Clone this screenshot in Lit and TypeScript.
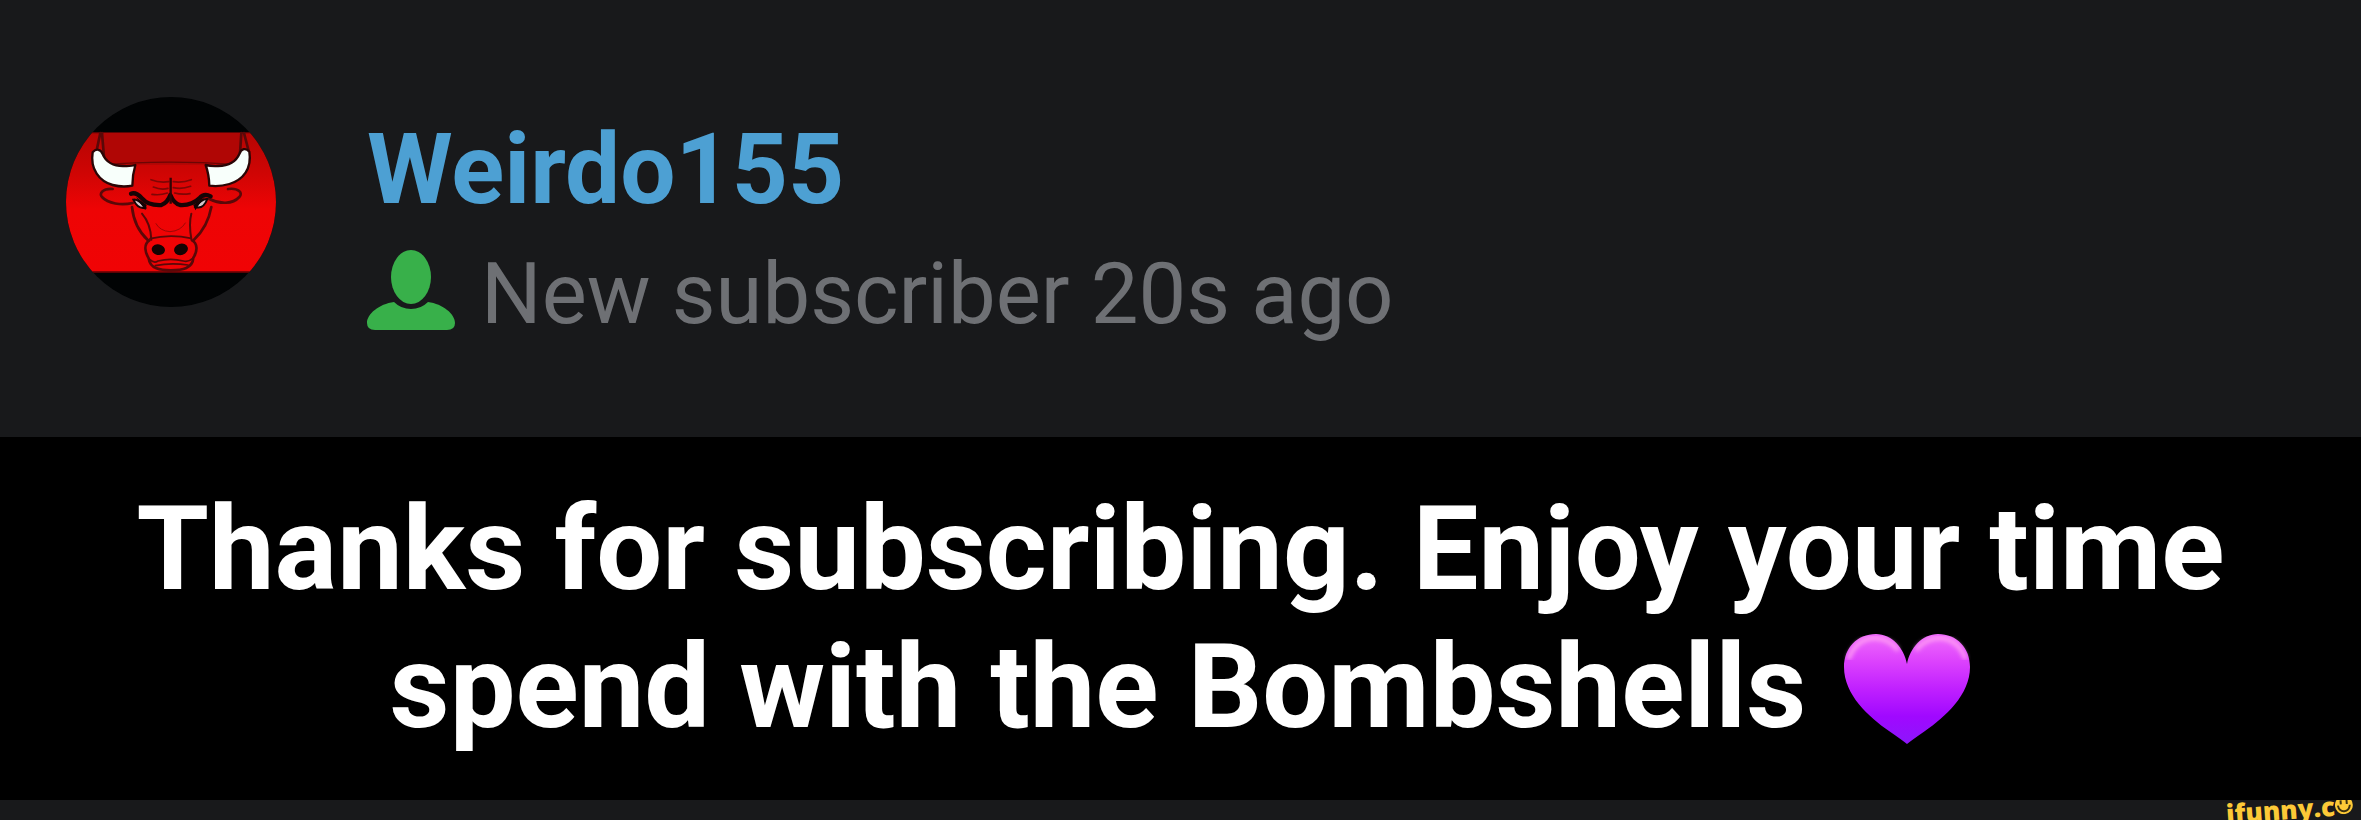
import { LitElement, html, css } from "lit";
import { customElement } from "lit/decorators.js";

@customElement("user-avatar")
class UserAvatar extends LitElement {
  static styles = css`
    :host { display: block; flex: none; width: 210px; height: 210px; }
    .art { display: block; width: 100%; height: 100%; }
  `;
  render() {
    return html`
      <svg class="art" viewBox="0 0 630 630" role="img" aria-label="Weirdo155 avatar">
        <defs>
          <clipPath id="disc"><circle cx="315" cy="315" r="315" /></clipPath>
          <linearGradient id="field" x1="0" y1="0" x2="0" y2="1">
            <stop offset="0" stop-color="#b50503" />
            <stop offset=".3" stop-color="#d00504" />
            <stop offset=".55" stop-color="#ee0405" />
            <stop offset="1" stop-color="#f00305" />
          </linearGradient>
        </defs>
        <g clip-path="url(#disc)">
          <rect width="630" height="630" fill="#010304" />
          <rect y="106" width="630" height="420" fill="url(#field)" />
          <path d="M0 107H630M0 525H630" stroke="#5d0304" stroke-width="4" />
          <path d="M112 108V174Q128 196 160 203H465Q505 194 524 170V108Z" fill="#b00605" />
          <path d="M118 204C230 192 390 194 505 202" fill="none" stroke="#6b0504" stroke-width="4" />
          <g fill="none" stroke="#5a0808" stroke-width="8" stroke-linecap="round" stroke-linejoin="round">
            <path d="M103 108L92 160M108 108L114 180M526 108L522 170M534 108L548 162" />
            <path d="M140 276C110 274 98 290 108 300C126 320 166 326 200 318" />
            <path d="M486 276C518 272 532 288 520 300C500 322 462 322 430 306" />
            <path d="M198 330C202 370 218 404 246 430M436 330C428 374 412 402 384 428" />
            <path d="M228 350Q254 380 256 428M376 350Q368 380 376 426" stroke-width="6" />
            <path d="M252 425Q312 410 376 424" stroke-width="5" />
            <path d="M270 380Q282 402 312 404Q344 402 358 378" stroke-width="3" stroke="#9c0706" />
            <path d="M250 430C230 444 240 470 248 484C252 516 284 520 315 520C350 520 380 514 382 482C396 462 394 438 378 430" />
            <path d="M252 488Q264 500 276 492Q314 482 352 492Q368 496 380 484M268 506Q314 496 366 504" stroke-width="5" />
          </g>
          <g fill="none" stroke="#7f0605" stroke-width="5" stroke-linecap="round">
            <path d="M255 248Q280 258 308 254M262 270Q286 280 306 274M258 292Q282 296 304 288" />
            <path d="M376 248Q350 258 322 254M374 268Q346 278 322 272M372 290Q346 294 326 288" />
          </g>
          <g stroke="#2a0606" stroke-width="7" stroke-linejoin="round" fill="#f8fffb">
            <path d="M80 166C91 153 104 157 110 171C119 194 142 208 174 207Q196 208 208 204Q199 234 199 266Q170 272 140 264C100 253 72 217 80 166Z" />
            <path d="M550 164C539 151 526 155 520 171C511 192 488 206 456 207Q434 208 419 204Q429 232 430 266Q460 270 490 261C532 248 558 215 550 164Z" />
          </g>
          <path d="M195 290Q210 284 228 304Q246 326 286 324Q304 318 313 294Q324 320 342 324Q378 326 400 304Q414 288 434 298" fill="none" stroke="#160405" stroke-width="13" stroke-linecap="round" stroke-linejoin="round" />
          <path d="M314 242V320" stroke="#300505" stroke-width="7" />
          <path d="M202 308Q218 306 238 332Q216 338 202 308ZM424 306Q408 304 388 330Q412 338 424 306Z" fill="#d5c4cb" stroke="#160405" stroke-width="6" />
          <path d="M210 300L242 324L238 340L222 318ZM416 300L382 324L388 340L404 316Z" fill="#120304" />
          <g fill="#140303">
            <ellipse cx="277" cy="458" rx="20" ry="16" transform="rotate(12 277 458)" />
            <ellipse cx="345" cy="457" rx="21" ry="17" transform="rotate(-18 345 457)" />
          </g>
        </g>
      </svg>
    `;
  }
}

@customElement("app-root")
class AppRoot extends LitElement {
  static styles = css`
    :host {
      display: flex;
      flex-direction: column;
      min-height: 100vh;
      background: #18191b;
      font-family: Roboto, "Liberation Sans", sans-serif;
    }
    .event { display: flex; align-items: flex-start; gap: 91px; padding: 97px 66px 86px; }
    .details { flex: 1; padding-top: 15px; }
    .name { margin: 0; font-size: 98px; line-height: 116px; font-weight: 700; color: #4da0d3; }
    .status { display: flex; align-items: center; gap: 26px; margin: 0; padding-top: 10px; font-size: 85px; line-height: 113px; color: #6e7074; }
    .person { flex: none; width: 88px; height: 80px; padding-bottom: 10px; fill: #38b04a; }
    .message {
      margin: 0;
      padding: 43px 128px 44px;
      background: #000;
      color: #fff;
      font-size: 117px;
      line-height: 138px;
      font-weight: 700;
      text-align: center;
    }
    .heart { width: 128px; height: 112px; margin-left: 8px; vertical-align: -18px; }
    .footer { position: relative; flex: 1; min-height: 20px; overflow: hidden; }
    .brand {
      position: absolute;
      right: 8px;
      top: -5px;
      display: flex;
      align-items: center;
      font: 800 26px/28px "Open Sans", sans-serif;
      color: #fcc937;
      transform: rotate(-4deg);
    }
    .smile { width: 18px; height: 18px; }
  `;
  render() {
    return html`
      <section class="event">
        <user-avatar></user-avatar>
        <div class="details">
          <h1 class="name">Weirdo155</h1>
          <p class="status">
            <svg class="person" viewBox="0 0 88 80" aria-hidden="true">
              <ellipse cx="44" cy="27" rx="20" ry="27" />
              <path d="M27 52C12 54 0 64 0 73Q0 80 8 80H80Q88 80 88 73C88 64 76 54 61 52Q54 59 44 59Q34 59 27 52Z" />
            </svg>
            <span>New subscriber 20s ago</span>
          </p>
        </div>
      </section>
      <p class="message">
        Thanks for subscribing. Enjoy your time spend with the Bombshells
        <svg class="heart" viewBox="0 0 128 112" role="img" aria-label="purple heart">
          <defs>
            <linearGradient id="violet" x1="0" y1="0" x2="0" y2="1">
              <stop offset="0" stop-color="#f06cfb" />
              <stop offset=".25" stop-color="#dc42fd" />
              <stop offset=".5" stop-color="#c020ff" />
              <stop offset=".75" stop-color="#a008ff" />
              <stop offset="1" stop-color="#8c16fb" />
            </linearGradient>
            <filter id="soft"><feGaussianBlur stdDeviation="2" /></filter>
          </defs>
          <path fill="url(#violet)" d="M64 31C61 15 49 1 33 1C14 1 1 15 1 34C1 62 26 84 46 98Q59 107 64 111Q69 107 82 98C102 84 127 62 127 34C127 15 114 1 95 1C79 1 67 15 64 31Z" />
          <path fill="none" stroke="#ff9cf4" stroke-width="4" stroke-linecap="round" filter="url(#soft)" d="M6 25Q13 6 32 5Q46 6 54 16M74 16Q82 6 96 5Q115 6 122 25" />
        </svg>
      </p>
      <footer class="footer">
        <div class="brand">
          <span>ifunny.c</span>
          <svg class="smile" viewBox="0 0 18 18" aria-hidden="true">
            <circle cx="9" cy="9" r="9" fill="#fcc937" />
            <path d="M3 9Q4 15 9 15Q14 15 15 9" fill="none" stroke="#3b300f" stroke-width="2" />
            <path d="M6 4V8M12 4V8" stroke="#3b300f" stroke-width="2" />
          </svg>
        </div>
      </footer>
    `;
  }
}
